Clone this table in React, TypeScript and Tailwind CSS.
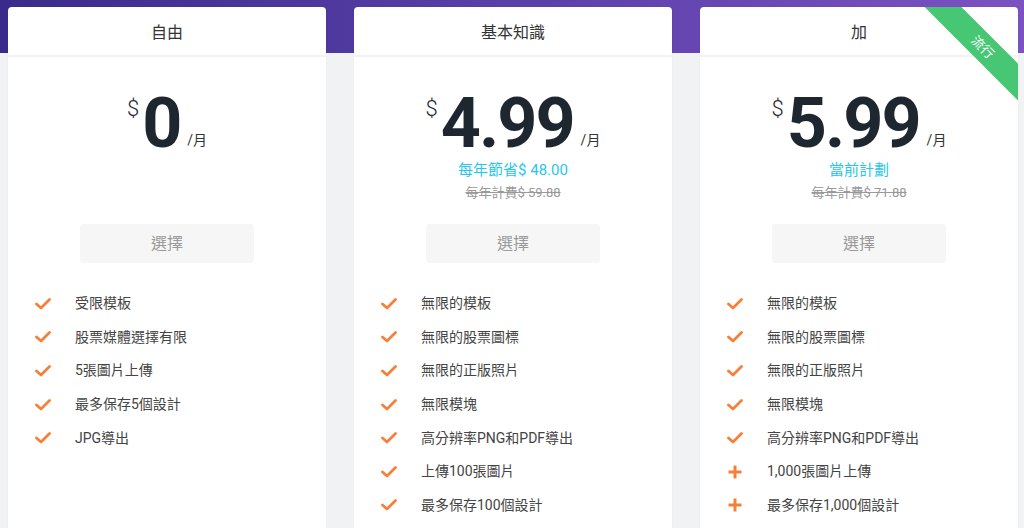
import React from "react";

const font = { fontFamily: 'Roboto, "Noto Sans CJK TC", sans-serif' };

function Check() {
  return (
    <svg width="16" height="12" viewBox="0 0 16 12" fill="none">
      <path d="M1.5 6 L6 10 L14.5 1.5" stroke="#f6803a" strokeWidth="2.8" strokeLinecap="round" strokeLinejoin="round" />
    </svg>
  );
}

function Plus() {
  return (
    <svg width="16" height="16" viewBox="0 0 16 16" fill="none">
      <path d="M8 1.5 V14.5 M1.5 8 H14.5" stroke="#f6803a" strokeWidth="3" strokeLinecap="butt" />
    </svg>
  );
}

type Plan = {
  title: string;
  price: string;
  note?: string;
  strike?: string;
  features: { t: string; plus?: boolean }[];
  ribbon?: boolean;
};

const plans: Plan[] = [
  {
    title: "自由",
    price: "0",
    features: [
      { t: "受限模板" },
      { t: "股票媒體選擇有限" },
      { t: "5張圖片上傳" },
      { t: "最多保存5個設計" },
      { t: "JPG導出" },
    ],
  },
  {
    title: "基本知識",
    price: "4.99",
    note: "每年節省$ 48.00",
    strike: "每年計費$ 59.88",
    features: [
      { t: "無限的模板" },
      { t: "無限的股票圖標" },
      { t: "無限的正版照片" },
      { t: "無限模塊" },
      { t: "高分辨率PNG和PDF導出" },
      { t: "上傳100張圖片" },
      { t: "最多保存100個設計" },
    ],
  },
  {
    title: "加",
    price: "5.99",
    note: "當前計劃",
    strike: "每年計費$ 71.88",
    ribbon: true,
    features: [
      { t: "無限的模板" },
      { t: "無限的股票圖標" },
      { t: "無限的正版照片" },
      { t: "無限模塊" },
      { t: "高分辨率PNG和PDF導出" },
      { t: "1,000張圖片上傳", plus: true },
      { t: "最多保存1,000個設計", plus: true },
    ],
  },
];

function Card({ p }: { p: Plan }) {
  return (
    <div className="relative w-[318px] shrink-0 bg-white rounded-t-[4px] overflow-hidden shadow-[0_0_2px_rgba(0,0,0,0.06)]">
      {p.ribbon && (
        <div className="absolute left-[213px] top-[27px] w-[140px] h-[26px] rotate-45 bg-[#47c774] flex items-center justify-center text-white text-[13px] leading-none">
          流行
        </div>
      )}
      <div className="h-[50px] pt-[4px] flex items-center justify-center text-[16px] text-[#333] border-b-[2px] border-[#f3f3f3]">
        {p.title}
      </div>
      <div className="h-[103px] flex flex-col items-center pt-[38px]">
        <div className="flex items-start text-[#1e2730]">
          <span className="text-[22px] leading-none mt-[3px] mr-[3px] font-light">$</span>
          <span className="text-[70px] leading-[56px] font-bold tracking-[-2px]">{p.price}</span>
          <span className="text-[14px] leading-none self-end mb-[4px] ml-[7px] text-[#333]">/月</span>
        </div>
      </div>
      <div className="h-[64px] flex flex-col items-center">
        {p.note && <div className="text-[15px] leading-[20px] text-[#27c7ea]">{p.note}</div>}
        {p.strike && (
          <div className="text-[13px] leading-[18px] text-[#999] line-through mt-[4px]">{p.strike}</div>
        )}
      </div>
      <div className="flex justify-center">
        <div className="w-[174px] h-[39px] bg-[#f6f6f6] rounded-[3px] flex items-center justify-center text-[16px] text-[#9a9a9a]">
          選擇
        </div>
      </div>
      <div className="mt-[24px] flex flex-col">
        {p.features.map((f, i) => (
          <div key={i} className="h-[33.6px] flex items-center">
            <div className="w-[67px] pl-[27px] flex items-center">{f.plus ? <Plus /> : <Check />}</div>
            <div className="text-[14px] text-[#444]">{f.t}</div>
          </div>
        ))}
      </div>
    </div>
  );
}

export default function App() {
  return (
    <div
      className="w-[1024px] h-[528px] overflow-hidden bg-[linear-gradient(to_bottom,transparent_53px,#f1f2f4_53px),linear-gradient(to_right,#3a2b8a,#5a3fa8_50%,#7c52c2)]"
      style={font}
    >
      <div className="flex gap-[28px] pl-[8px] pt-[7px] h-[528px]">
        {plans.map((p, i) => (
          <Card key={i} p={p} />
        ))}
      </div>
    </div>
  );
}
